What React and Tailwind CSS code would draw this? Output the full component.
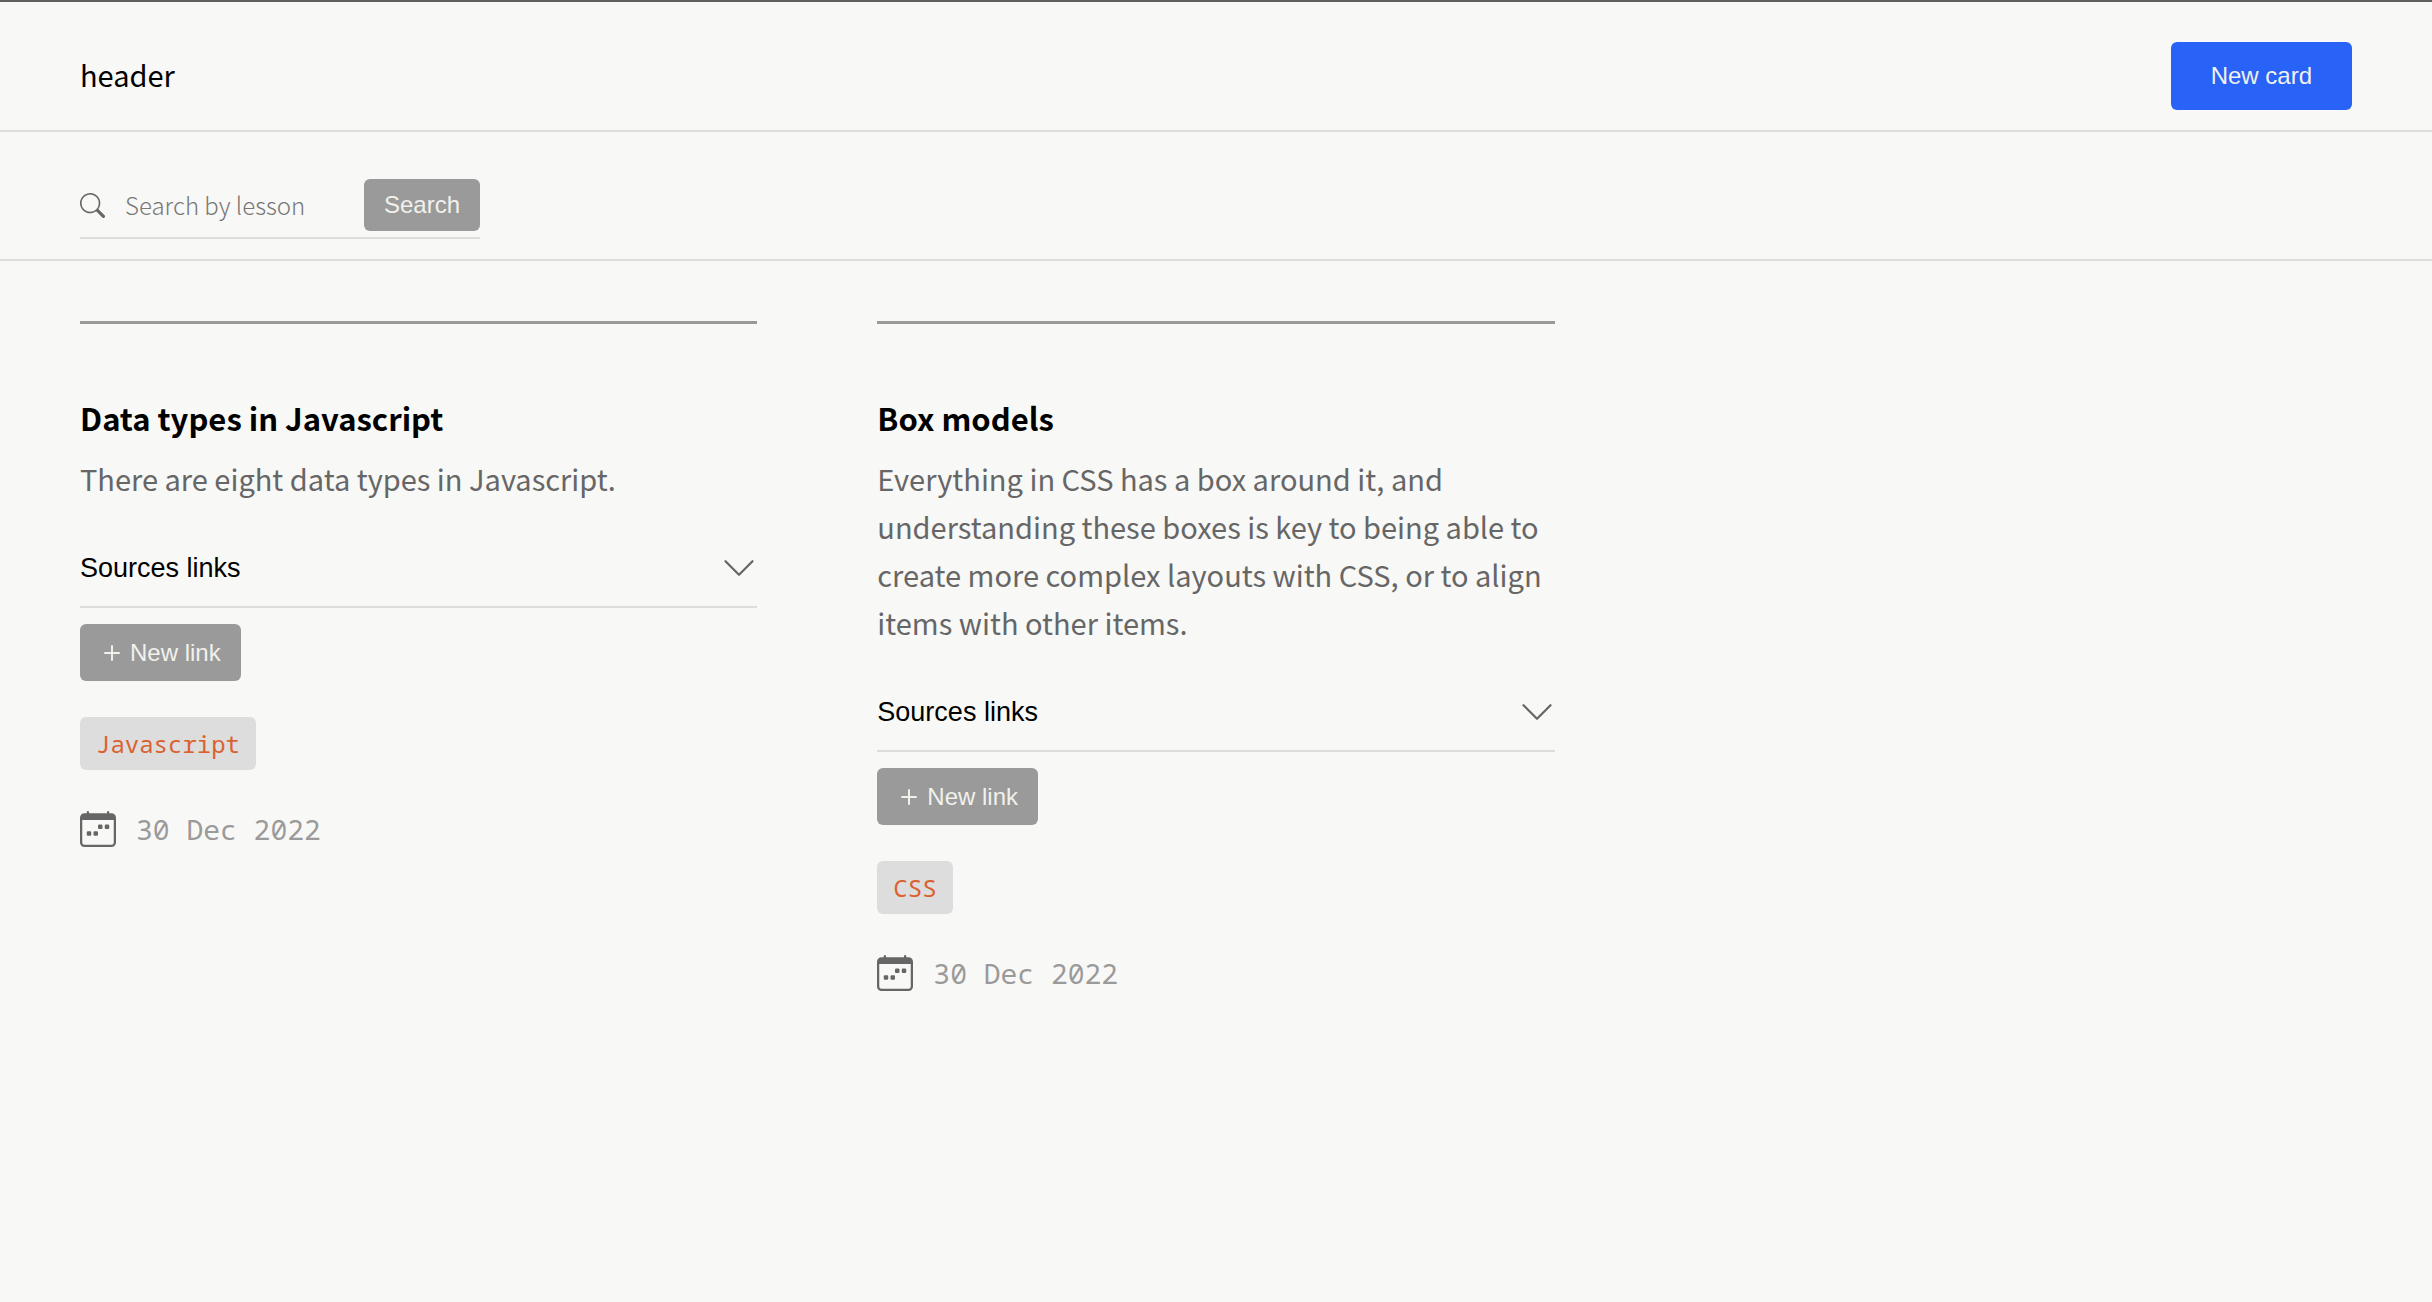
import { BsSearch, BsChevronDown, BsPlus, BsCalendarWeek } from "react-icons/bs";

const cards = [
  {
    title: "Data types in Javascript",
    text: "There are eight data types in Javascript.",
    tag: "Javascript",
    date: "30 Dec 2022",
  },
  {
    title: "Box models",
    text: "Everything in CSS has a box around it, and understanding these boxes is key to being able to create more complex layouts with CSS, or to align items with other items.",
    tag: "CSS",
    date: "30 Dec 2022",
  },
];

function Card({ title, text, tag, date }) {
  return (
    <article className="flex flex-col items-start border-t-3 border-[#9a9a9a] pt-[70px]">
      <h2 className="text-[31px] leading-12 font-bold text-black">{title}</h2>
      <p className="mt-3 text-[29px] leading-12 text-[#666]">{text}</p>
      <button
        type="button"
        aria-expanded="false"
        className="mt-6 flex w-full items-center justify-between border-b-2 border-[#ddd] pt-[22px] pb-[18px] font-['Liberation_Sans',Arial,sans-serif] text-[27px] leading-10 text-black"
      >
        Sources links
        <BsChevronDown className="size-9 text-[#666]" />
      </button>
      <button
        type="button"
        className="mt-4 flex h-[57px] items-center gap-0.5 rounded-md bg-[#9a9a9a] pr-5 pl-4 font-['Liberation_Sans',Arial,sans-serif] text-[24px] text-[#f1f1ec]"
      >
        <BsPlus className="size-8" />
        New link
      </button>
      <span className="mt-9 rounded-md bg-[#ddd] px-4 py-2 font-['Noto_Sans_Mono','DejaVu_Sans_Mono',monospace] text-[24px] leading-[37px] text-[#db6130]">
        {tag}
      </span>
      <div className="mt-[35px] flex items-center gap-5 text-[#666]">
        <BsCalendarWeek className="size-9" />
        <time
          dateTime="2022-12-30"
          className="font-['Noto_Sans_Mono','DejaVu_Sans_Mono',monospace] text-[28px] leading-12 text-[#9a9a9a]"
        >
          {date}
        </time>
      </div>
    </article>
  );
}

export default function App() {
  return (
    <div className="min-h-screen border-t-2 border-[#5f5f5f] bg-[#f8f8f6] font-['Noto_Sans_CJK_SC',sans-serif]">
      <header className="flex items-start justify-between border-b-2 border-[#ddd] px-20 pt-10 pb-5">
        <span className="text-[29px] leading-16 text-black">header</span>
        <button
          type="button"
          className="h-17 rounded-md bg-[#2962f6] px-10 font-['Liberation_Sans',Arial,sans-serif] text-[24px] text-[#f1f1ec]"
        >
          New card
        </button>
      </header>
      <div className="border-b-2 border-[#ddd] px-20 pt-[47px] pb-5">
        <form
          className="flex w-[400px] items-center border-b-2 border-[#ddd] pb-1.5"
          onSubmit={(e) => e.preventDefault()}
        >
          <BsSearch className="size-[25px] shrink-0 text-[#666]" />
          <input
            type="text"
            aria-label="Search by lesson"
            placeholder="Search by lesson"
            className="ml-5 min-w-0 flex-1 bg-transparent text-[24px] leading-9 font-light outline-none placeholder:text-[#777]"
          />
          <button
            type="submit"
            className="h-13 rounded-md bg-[#9a9a9a] px-5 font-['Liberation_Sans',Arial,sans-serif] text-[24px] text-[#f1f1ec]"
          >
            Search
          </button>
        </form>
      </div>
      <main className="grid grid-cols-3 items-start gap-30 px-20 py-15">
        {cards.map((card) => (
          <Card key={card.title} {...card} />
        ))}
      </main>
    </div>
  );
}
